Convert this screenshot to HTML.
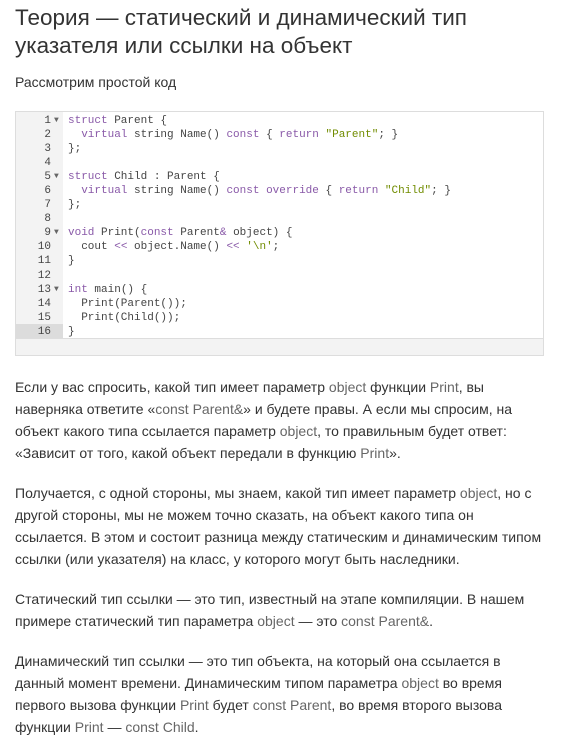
<!DOCTYPE html>
<html><head><meta charset="utf-8"><style>
body{margin:0;background:#fff;font-family:"Liberation Sans",sans-serif;color:#333;}
h1{position:absolute;left:15px;top:4px;margin:0;font-weight:normal;font-size:22.5px;line-height:28px;color:#333;width:540px}
.p{position:absolute;left:15px;font-size:14px;line-height:22px;color:#333;width:530px;margin:0}
.c{color:#666}
.box{position:absolute;left:15px;top:111px;width:527px;height:243px;border:1px solid #ddd;background:#f3f3f3}
.ed{position:absolute;left:0;top:0;width:527px;height:226px;background:#fff;border-bottom:1px solid #ddd}
.g{position:absolute;left:0;top:0;width:47px;height:226px;background:#f3f3f3}
pre{margin:0;font-family:"Liberation Mono",monospace;font-size:11px;line-height:14.05px}
.ln{position:absolute;left:0;top:2px;width:35px;text-align:right;color:#444}
.ar{position:absolute;left:38px;top:2px;color:#666;font-size:8px}
.code{position:absolute;left:52px;top:2px;color:#444}
.k{color:#8959a8}.s{color:#718c00}.hl{position:absolute;left:0;top:212px;width:47px;height:14px;background:#dcdcdc}
</style></head><body>
<h1>Теория — статический и динамический тип указателя или ссылки на объект</h1>
<p class="p" style="top:71px">Рассмотрим простой код</p>
<div class="box"><div class="ed"><div class="g"></div><div class="hl"></div>
<pre class="ln">1
2
3
4
5
6
7
8
9
10
11
12
13
14
15
16</pre>
<pre class="ar">▼



▼



▼



▼</pre>
<pre class="code"><span class="k">struct</span> Parent {
  <span class="k">virtual</span> string Name() <span class="k">const</span> { <span class="k">return</span> <span class="s">"Parent"</span>; }
};

<span class="k">struct</span> Child : Parent {
  <span class="k">virtual</span> string Name() <span class="k">const</span> <span class="k">override</span> { <span class="k">return</span> <span class="s">"Child"</span>; }
};

<span class="k">void</span> Print(<span class="k">const</span> Parent<span class="k">&amp;</span> object) {
  cout <span class="k">&lt;&lt;</span> object.Name() <span class="k">&lt;&lt;</span> <span class="s">'\n'</span>;
}

<span class="k">int</span> main() {
  Print(Parent());
  Print(Child());
}</pre></div></div>
<p class="p" style="top:376px">Если у вас спросить, какой тип имеет параметр <span class="c">object</span> функции <span class="c">Print</span>, вы наверняка ответите «<span class="c">const Parent&amp;</span>» и будете правы. А если мы спросим, на объект какого типа ссылается параметр <span class="c">object</span>, то правильным будет ответ: «Зависит от того, какой объект передали в функцию <span class="c">Print</span>».</p>
<p class="p" style="top:482px">Получается, с одной стороны, мы знаем, какой тип имеет параметр <span class="c">object</span>, но с другой стороны, мы не можем точно сказать, на объект какого типа он ссылается. В этом и состоит разница между статическим и динамическим типом ссылки (или указателя) на класс, у которого могут быть наследники.</p>
<p class="p" style="top:588px">Статический тип ссылки — это тип, известный на этапе компиляции. В нашем примере статический тип параметра <span class="c">object</span> — это <span class="c">const Parent&amp;</span>.</p>
<p class="p" style="top:650px">Динамический тип ссылки — это тип объекта, на который она ссылается в данный момент времени. Динамическим типом параметра <span class="c">object</span> во время первого вызова функции <span class="c">Print</span> будет <span class="c">const Parent</span>, во время второго вызова функции <span class="c">Print</span> — <span class="c">const Child</span>.</p>
</body></html>
